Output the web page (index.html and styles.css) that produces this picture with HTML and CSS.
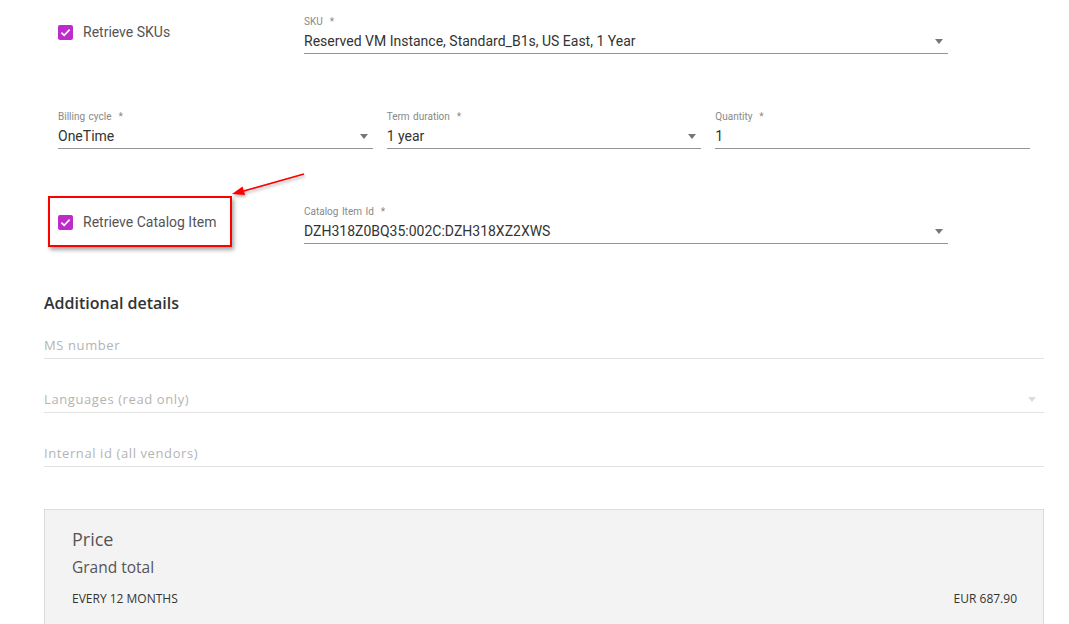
FILE: index.html
```html
<!DOCTYPE html>
<html lang="en">
<head>
<meta charset="utf-8">
<title>Order line</title>
<link rel="stylesheet" href="styles.css">
</head>
<body>
<main class="page">
  <section class="row row-sku">
    <div class="check-cell">
      <label class="check">
        <span class="box"><svg viewBox="0 0 16 16" width="15" height="15"><path d="M3.6 8.2 6.6 11.1 12.4 5" fill="none" stroke="#fff" stroke-width="1.8"/></svg></span>
        <span class="check-text">Retrieve SKUs</span>
      </label>
    </div>
    <div class="field field-wide">
      <div class="field-label">SKU &nbsp;*</div>
      <div class="field-value">
        <span>Reserved VM Instance, Standard_B1s, US East, 1 Year</span>
        <span class="caret"></span>
      </div>
    </div>
  </section>

  <section class="row row-billing">
    <div class="field">
      <div class="field-label">Billing cycle &nbsp;*</div>
      <div class="field-value"><span>OneTime</span><span class="caret"></span></div>
    </div>
    <div class="field">
      <div class="field-label">Term duration &nbsp;*</div>
      <div class="field-value"><span>1 year</span><span class="caret"></span></div>
    </div>
    <div class="field">
      <div class="field-label">Quantity &nbsp;*</div>
      <div class="field-value"><span>1</span></div>
    </div>
  </section>

  <section class="row row-catalog">
    <div class="check-cell">
      <label class="check marked">
        <span class="box"><svg viewBox="0 0 16 16" width="15" height="15"><path d="M3.6 8.2 6.6 11.1 12.4 5" fill="none" stroke="#fff" stroke-width="1.8"/></svg></span>
        <span class="check-text">Retrieve Catalog Item</span>
        <svg class="pointer" viewBox="0 0 80 30" width="80" height="30">
          <line x1="76" y1="2" x2="14" y2="19.5" stroke="#f00" stroke-width="1.6"/>
          <polygon points="4,22 14.5,14.5 17,23" fill="#f00"/>
        </svg>
      </label>
    </div>
    <div class="field field-wide">
      <div class="field-label">Catalog Item Id &nbsp;*</div>
      <div class="field-value"><span>DZH318Z0BQ35:002C:DZH318XZ2XWS</span><span class="caret"></span></div>
    </div>
  </section>

  <section class="details">
    <h2 class="details-title">Additional details</h2>
    <div class="plain-field"><span>MS number</span></div>
    <div class="plain-field"><span>Languages (read only)</span><span class="caret light"></span></div>
    <div class="plain-field"><span>Internal id (all vendors)</span></div>
  </section>

  <section class="price">
    <h3 class="price-title">Price</h3>
    <div class="price-sub">Grand total</div>
    <div class="price-line">
      <span>EVERY 12 MONTHS</span>
      <span>EUR 687.90</span>
    </div>
  </section>
</main>
</body>
</html>
```

FILE: styles.css
```css
html, body {
  margin: 0;
  padding: 0;
  background: #fff;
}

.page {
  width: 1000px;
  padding: 16px 0 0 44px;
  font-family: Roboto, "Liberation Sans", sans-serif;
}

/* form rows */
.row {
  display: flex;
  align-items: flex-start;
}

.row-sku {
  padding-left: 14px;
}

.row-billing {
  margin-top: 57px;
  padding-left: 14px;
  width: 972px;
  gap: 14px;
}

.row-billing .field {
  flex: 1 1 0;
}

.row-catalog {
  margin-top: 57px;
  padding-left: 14px;
}

.check-cell {
  width: 246px;
  flex: none;
  padding-top: 9px;
}

.check {
  position: relative;
  display: flex;
  align-items: center;
  gap: 10px;
  height: 15px;
}

.box {
  width: 15px;
  height: 15px;
  border-radius: 2px;
  background: #bf2bcb;
  display: flex;
}

.check-text {
  font-size: 14px;
  color: #555;
  line-height: 15px;
}

/* red annotation frame around the catalog option */
.check.marked::before {
  content: "";
  position: absolute;
  left: -10px;
  top: -19px;
  width: 180px;
  height: 47px;
  border: 2px solid #f00;
  box-shadow: 2px 3px 4px rgba(0, 0, 0, 0.35);
}

.pointer {
  position: absolute;
  left: 170px;
  top: -43px;
  filter: drop-shadow(1px 2px 1.5px rgba(0, 0, 0, 0.3));
}

.field {
  display: flex;
  flex-direction: column;
}

.field-wide {
  width: 644px;
}

.field-label {
  font-size: 10px;
  line-height: 12px;
  color: #888;
  word-spacing: 1px;
}

.field-value {
  display: flex;
  align-items: center;
  justify-content: space-between;
  margin-top: 3px;
  height: 20px;
  padding-bottom: 2px;
  border-bottom: 1px solid #949494;
  font-size: 14px;
  color: #333;
}

.caret {
  width: 0;
  height: 0;
  margin-right: 5px;
  border-left: 4.5px solid transparent;
  border-right: 4.5px solid transparent;
  border-top: 5px solid #777;
}

.caret.light {
  border-top-color: #ddd;
  margin-right: 8px;
}

/* additional details */
.details {
  margin-top: 49px;
  font-family: "Open Sans", "Liberation Sans", sans-serif;
}

.details-title {
  margin: 0;
  font-size: 16px;
  font-weight: 600;
  line-height: 20px;
  color: #333;
}

.plain-field {
  display: flex;
  align-items: center;
  justify-content: space-between;
  height: 20px;
  margin-top: 30px;
  padding-bottom: 3px;
  border-bottom: 1px solid #e2e2e2;
  font-size: 13px;
  letter-spacing: 0.6px;
  color: #b4b4b4;
}

.details-title + .plain-field {
  margin-top: 22px;
}

/* price summary */
.price {
  margin-top: 42px;
  background: #f3f3f3;
  border: 1px solid #dcdcdc;
  padding: 17px 26px 20px 27px;
  font-family: "Open Sans", "Liberation Sans", sans-serif;
  color: #555;
}

.price-title {
  margin: 0;
  font-size: 18px;
  font-weight: 400;
  line-height: 24px;
}

.price-sub {
  margin-top: 6px;
  font-size: 15.5px;
  line-height: 20px;
}

.price-line {
  display: flex;
  justify-content: space-between;
  margin-top: 14px;
  font-size: 12px;
  line-height: 16px;
  color: #333;
}
```
